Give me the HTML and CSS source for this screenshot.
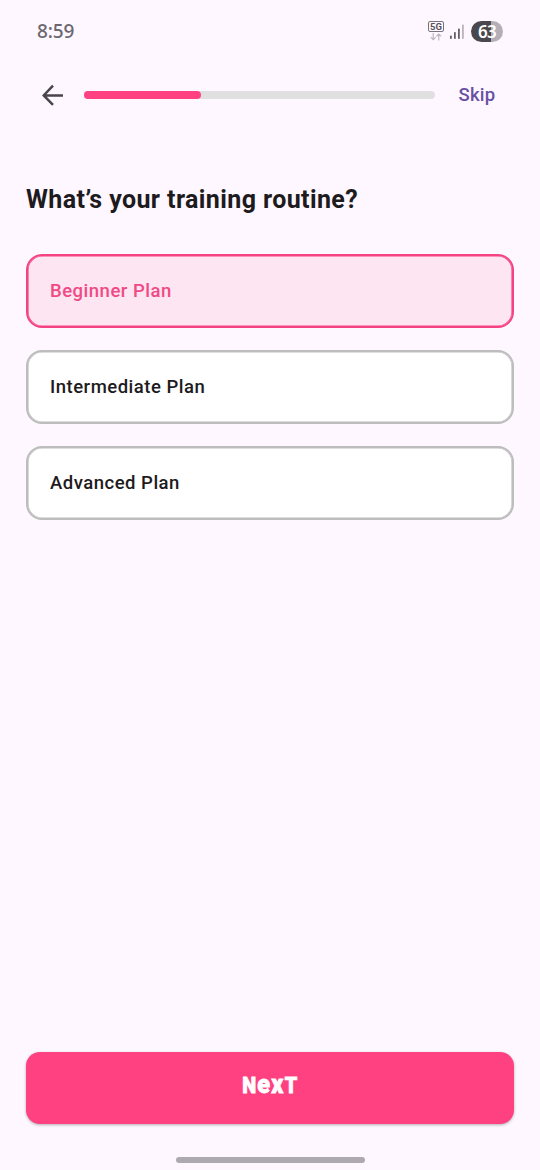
FILE: index.html
```html
<!DOCTYPE html>
<html lang="en">
<head>
<meta charset="utf-8">
<title>Training routine</title>
<link rel="stylesheet" href="styles.css">
</head>
<body>
<div class="screen">
  <div class="status">
    <span class="time">8:59</span>
    <div class="indicators">
      <div class="network">
        <span class="network-type">5G</span>
        <svg width="12" height="8" viewBox="0 0 12 8" fill="none" stroke="#b9b4bd" stroke-width="1.1"><path d="M3.2 0v6.6M.8 4.2l2.4 2.4 2.4-2.4M8.8 7.6V1M6.4 3.4L8.800 1l2.400 2.400"/></svg>
      </div>
      <svg class="signal" width="14" height="15" viewBox="0 0 14 15"><g fill="#656169"><rect x="0" y="11.500" width="1.800" height="3.500" rx=".7"/><rect x="4" y="8" width="1.800" height="7" rx=".7"/><rect x="8" y="4.500" width="1.800" height="10.500" rx=".7"/></g><rect x="12" y="0.500" width="1.800" height="14.500" rx=".7" fill="#b8b3bc"/></svg>
      <span class="battery">63</span>
    </div>
  </div>
  <header class="header">
    <svg class="back" width="22" height="22" viewBox="0 0 22 22" fill="none" stroke="#48454b" stroke-width="2.5"><path d="M21 11.500H2M11 1.700L1.700 11.500l9.300 9.300"/></svg>
    <div class="progress"><div class="progress-fill"></div></div>
    <span class="skip">Skip</span>
  </header>
  <main class="content">
    <h1 class="title">What’s your training routine?</h1>
    <div class="options">
      <div class="option selected">Beginner Plan</div>
      <div class="option">Intermediate Plan</div>
      <div class="option">Advanced Plan</div>
    </div>
  </main>
  <button class="next"><span class="next-label">N<span class="small">ex</span>T</span></button>
  <div class="home-bar"></div>
</div>
</body>
</html>
```

FILE: styles.css
```css
* { box-sizing: border-box; }
body { margin: 0; background: #fef7ff; font-family: Roboto, sans-serif; color: #1d1b20; }
.screen { width: 540px; height: 1170px; display: flex; flex-direction: column; overflow: hidden; }
.status { height: 62px; padding: 0 37px; display: flex; align-items: center; justify-content: space-between; }
.time { font: 500 19px/20px "Noto Sans", sans-serif; letter-spacing: -0.1px; color: #6b676e; }
.indicators { display: flex; align-items: center; }
.network { width: 16px; display: flex; flex-direction: column; align-items: center; gap: 1px; margin-right: 6px; }
.network-type { width: 16px; height: 11px; border: 1px solid #77737a; border-radius: 2px; font: 700 9.5px/9px Roboto, sans-serif; text-align: center; color: #56525a; }
.signal { margin: 0 7px 0 0; }
.battery { width: 32px; height: 21px; border-radius: 11px; background: linear-gradient(90deg, #4b484d 63%, #b4afb7 63%); color: #fff; font: 600 17px/21px "Noto Sans", sans-serif; text-align: center; letter-spacing: -0.8px; }
.header { height: 66px; padding: 0 44px 0 42px; display: flex; align-items: center; }
.back { flex: none; }
.progress { flex: none; width: 351px; height: 8px; margin: 0 23.5px 0 20px; border-radius: 4px; background: #e0e0e0; }
.progress-fill { width: 117px; height: 8px; border-radius: 4px; background: #ff4081; }
.skip { font-size: 18.5px; font-weight: 500; line-height: 24px; letter-spacing: 0.2px; color: #6750a4; }
.content { flex: 1; padding: 56px 26px 0; }
.title { margin: 0; font-size: 25px; font-weight: 700; line-height: 32px; letter-spacing: 0.4px; }
.options { margin-top: 38px; display: flex; flex-direction: column; gap: 22px; }
.option { height: 74px; padding: 0 22px; border: 2px solid #bdbdbd; border-radius: 16px; background: #fff; box-shadow: inset 0 0 0 0.6px #bdbdbd; font-size: 18.5px; font-weight: 500; line-height: 70px; letter-spacing: 0.5px; }
.selected { border-color: #f54382; background: #fde5f1; box-shadow: inset 0 0 0 0.6px #f54382; color: #f04a86; }
.next { height: 72px; margin: 0 26px; padding: 0 0 5px; border: 0; border-radius: 14px; background: #ff4081; box-shadow: 0 1px 3px rgba(0, 0, 0, 0.3); color: #fff; display: flex; align-items: center; justify-content: center; }
.next-label { font: 900 22px/28px Roboto, sans-serif; letter-spacing: 1.4px; margin-right: -1px; transform: scaleX(0.9); -webkit-text-stroke: 0.8px #fff; }
.small { font-size: 26px; line-height: 1; }
.home-bar { width: 189px; height: 6px; margin: 33px auto 7px; border-radius: 3px; background: #aea9b1; }
```
